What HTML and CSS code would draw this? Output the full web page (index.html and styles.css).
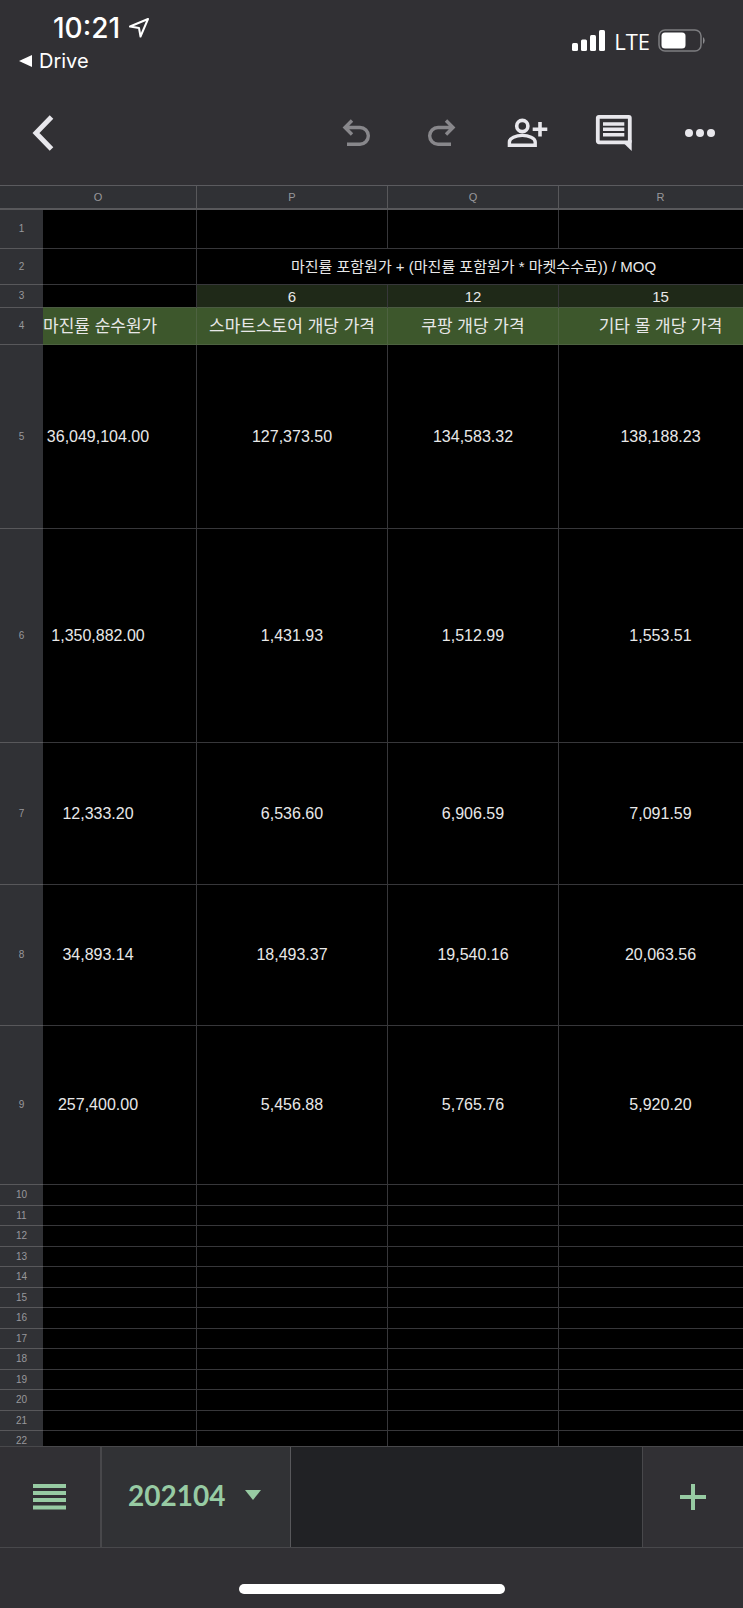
FILE: index.html
```
<!DOCTYPE html>
<html lang="ko">
<head>
    <meta charset="UTF-8">
    <meta name="viewport" content="width=device-width, initial-scale=1.0">
    <title>202104</title>
    <link rel="stylesheet" href="styles.css">
</head>
<body>

    <!-- Status bar -->
    <div class="status">
        <div class="status-left">
            <div class="clock">
                <span>10:21</span>
                <svg width="22" height="22" viewBox="0 0 22 22"><path d="M20 2L2 9.500L11 11L12.500 19.500Z" fill="none" stroke="#fff" stroke-width="2" stroke-linejoin="round"/></svg>
            </div>
            <a href="#" class="return">
                <svg width="14" height="14" viewBox="0 0 14 14"><path d="M0 7L13 1V13Z" fill="#fff"/></svg>
                Drive
            </a>
        </div>
        <div class="status-right">
            <svg width="34" height="22" viewBox="0 0 34 22" fill="#fff">
                <rect x="0" y="13" width="6" height="8" rx="1.500"/>
                <rect x="9" y="9.500" width="6" height="11.500" rx="1.500"/>
                <rect x="18" y="5" width="6" height="16" rx="1.500"/>
                <rect x="27" y="0" width="6" height="21" rx="1.500"/>
            </svg>
            <span>LTE</span>
            <svg width="48" height="24" viewBox="0 0 48 24">
                <rect x="1" y="1" width="42" height="21" rx="6" fill="none" stroke="#7d7d80" stroke-width="1.500"/>
                <rect x="3.500" y="3.500" width="24" height="16" rx="3.500" fill="#fff"/>
                <path d="M45 8a4.500 4.500 0 0 1 0 7Z" fill="#8b8b8e"/>
            </svg>
        </div>
    </div>

    <!-- Toolbar -->
    <header class="toolbar">
        <button class="tool back" aria-label="뒤로">
            <svg viewBox="0 0 48 48"><path d="M32.500 8L17 24L32.500 40" stroke-width="5"/></svg>
        </button>
        <button class="tool" aria-label="실행취소" disabled>
            <svg viewBox="0 0 48 48"><path d="M20 11.500L13 18.500L20 25.500M13 18.500H28A8.300 8.300 0 0 1 28 35.200H15" stroke-width="3.400"/></svg>
        </button>
        <button class="tool" aria-label="재실행" disabled>
            <svg viewBox="0 0 48 48"><path d="M28 11.500L35 18.500L28 25.500M35 18.500H20A8.300 8.300 0 0 0 20 35.200H33" stroke-width="3.400"/></svg>
        </button>
        <button class="tool" aria-label="공유">
            <svg viewBox="0 0 48 48">
                <circle cx="18.300" cy="17" r="5.600" stroke-width="3.600"/>
                <path d="M5.400 36.300V33C5.400 29 12 26.400 18.300 26.400S31.200 29 31.200 33V36.300Z" stroke-width="3.400"/>
                <path d="M36 13V27.600M28.700 20.300H43.300" stroke-width="3.600"/>
            </svg>
        </button>
        <button class="tool" aria-label="댓글">
            <svg viewBox="0 0 48 48">
                <rect x="7.800" y="7.800" width="32" height="25.500" rx="1" stroke-width="3.800"/>
                <path d="M34 34.500L41.700 42V31Z" class="solid"/>
                <path d="M13 15H34.300M13 20.300H34.300M13 25.700H34.300" stroke-width="3.600"/>
            </svg>
        </button>
        <button class="tool" aria-label="더보기">
            <svg viewBox="0 0 48 48" class="solid">
                <circle cx="13" cy="24" r="4"/>
                <circle cx="24" cy="24" r="4"/>
                <circle cx="35" cy="24" r="4"/>
            </svg>
        </button>
    </header>

    <!-- Sheet -->
    <main class="sheet">
        <table>
            <colgroup>
                <col class="col-num">
                <col class="col-o">
                <col class="col-p">
                <col class="col-q">
                <col>
            </colgroup>
            <thead>
                <tr><td class="corner"></td><th>O</th><th>P</th><th>Q</th><th>R</th></tr>
            </thead>
            <tbody>
                <tr class="row-1"><th>1</th><td></td><td></td><td></td><td></td></tr>
                <tr class="row-2"><th>2</th><td></td><td colspan="3">마진률 포함원가 + (마진률 포함원가 * 마켓수수료)) / MOQ</td></tr>
                <tr class="row-3"><th>3</th><td></td><td>6</td><td>12</td><td>15</td></tr>
                <tr class="row-4"><th>4</th><td>마진률 순수원가</td><td>스마트스토어 개당 가격</td><td>쿠팡 개당 가격</td><td>기타 몰 개당 가격</td></tr>
                <tr class="row-5"><th>5</th><td>36,049,104.00</td><td>127,373.50</td><td>134,583.32</td><td>138,188.23</td></tr>
                <tr class="row-6"><th>6</th><td>1,350,882.00</td><td>1,431.93</td><td>1,512.99</td><td>1,553.51</td></tr>
                <tr class="row-7"><th>7</th><td>12,333.20</td><td>6,536.60</td><td>6,906.59</td><td>7,091.59</td></tr>
                <tr class="row-8"><th>8</th><td>34,893.14</td><td>18,493.37</td><td>19,540.16</td><td>20,063.56</td></tr>
                <tr class="row-9"><th>9</th><td>257,400.00</td><td>5,456.88</td><td>5,765.76</td><td>5,920.20</td></tr>
                <tr><th>10</th><td></td><td></td><td></td><td></td></tr>
                <tr><th>11</th><td></td><td></td><td></td><td></td></tr>
                <tr><th>12</th><td></td><td></td><td></td><td></td></tr>
                <tr><th>13</th><td></td><td></td><td></td><td></td></tr>
                <tr><th>14</th><td></td><td></td><td></td><td></td></tr>
                <tr><th>15</th><td></td><td></td><td></td><td></td></tr>
                <tr><th>16</th><td></td><td></td><td></td><td></td></tr>
                <tr><th>17</th><td></td><td></td><td></td><td></td></tr>
                <tr><th>18</th><td></td><td></td><td></td><td></td></tr>
                <tr><th>19</th><td></td><td></td><td></td><td></td></tr>
                <tr><th>20</th><td></td><td></td><td></td><td></td></tr>
                <tr><th>21</th><td></td><td></td><td></td><td></td></tr>
                <tr><th>22</th><td></td><td></td><td></td><td></td></tr>
            </tbody>
        </table>
    </main>

    <!-- Sheet tabs -->
    <nav class="tabs">
        <button class="all-sheets" aria-label="모든 시트">
            <svg width="34" height="26" viewBox="0 0 34 26"><path d="M0 2H33M0 9H33M0 16H33M0 23.500H33" stroke-width="4"/></svg>
        </button>
        <button class="tab">
            202104
            <svg width="16" height="10" viewBox="0 0 16 10"><path d="M0 0H16L8 10Z" class="arrow"/></svg>
        </button>
        <div class="track"></div>
        <button class="add-sheet" aria-label="시트 추가">
            <svg width="26" height="26" viewBox="0 0 26 26"><path d="M13 0V26M0 13H26" stroke-width="4"/></svg>
        </button>
    </nav>

    <footer class="home">
        <div class="home-bar"></div>
    </footer>

</body>
</html>
```

FILE: styles.css
```
* {
    box-sizing: border-box;
}

body {
    margin: 0;
    height: 100vh;
    display: flex;
    flex-direction: column;
    overflow: hidden;
    background-color: #313034;
    color: #fff;
    font-family: "Liberation Sans", "Noto Sans CJK KR", sans-serif;
}

button {
    display: flex;
    align-items: center;
    justify-content: center;
    margin: 0;
    padding: 0;
    border: none;
    background: none;
    cursor: pointer;
}

svg {
    display: block;
    flex: none;
}

/* Status bar */
.status {
    flex: none;
    display: flex;
    justify-content: space-between;
    height: 80px;
    padding: 12px 37px 0 19px;
    font-family: Inter, sans-serif;
}

.clock {
    display: flex;
    align-items: center;
    gap: 8px;
    height: 32px;
    padding-left: 34px;
    font-size: 28px;
    font-weight: 500;
}

.return {
    display: flex;
    align-items: center;
    gap: 6px;
    height: 34px;
    color: #fff;
    font-size: 20px;
    text-decoration: none;
}

.status-right {
    display: flex;
    align-items: center;
    gap: 8px;
    height: 58px;
    font-family: "Open Sans", sans-serif;
    font-size: 22px;
    font-weight: 500;
}

/* Toolbar */
.toolbar {
    flex: none;
    display: flex;
    height: 105px;
}

.tool {
    width: 86px;
    color: #e8e7ec;
}

.tool:disabled {
    color: #88878b;
}

.tool svg {
    width: 48px;
    height: 48px;
    fill: none;
    stroke: currentColor;
}

.tool .solid {
    fill: currentColor;
    stroke: none;
}

.back {
    margin-right: auto;
}

/* Sheet */
.sheet {
    flex: 1;
    min-height: 0;
    overflow: hidden;
    border-top: 1px solid #5b5b5f;
    background-color: #000;
}

table {
    width: calc(100% + 20px);
    table-layout: fixed;
    border-collapse: separate;
    border-spacing: 0;
}

.col-num {
    width: 43px;
}

.col-o {
    width: 154px;
}

.col-p {
    width: 191px;
}

.col-q {
    width: 171px;
}

td,
th {
    height: 20px;
    padding: 0;
    border-right: 1px solid #37373a;
    border-bottom: 1px solid #37373a;
    color: #e8e8e8;
    font-size: 16px;
    line-height: 1;
    text-align: center;
    white-space: nowrap;
}

tr:nth-child(even) > * {
    height: 21px;
}

th,
.corner {
    border-color: #58585b;
    background-color: #303135;
    color: #98989c;
    font-size: 10px;
    font-weight: 400;
}

tbody th,
.corner {
    border-right: none;
}

thead th,
thead .corner {
    height: 24px;
    border-bottom-width: 2px;
}

thead th {
    font-size: 11px;
}

tr > :nth-child(2) {
    padding-right: 43px;
}

tbody .row-1 > * {
    height: 39px;
}

tbody .row-2 > * {
    height: 36px;
}

.row-2 td {
    font-size: 15px;
}

.row-2 td:last-child {
    padding-right: 12px;
}

tbody .row-3 > * {
    height: 23px;
}

.row-3 td {
    border-bottom-color: #4b5a42;
    font-size: 15px;
}

.row-3 td:nth-child(n+3) {
    background-color: #1f2918;
}

tbody .row-4 > * {
    height: 37px;
}

.row-4 td {
    border-color: #4d6240;
    background-color: #3d572c;
    font-size: 17px;
}

tbody .row-5 > * {
    height: 184px;
}

tbody .row-6 > * {
    height: 214px;
}

tbody .row-7 > * {
    height: 142px;
}

tbody .row-8 > * {
    height: 141px;
}

tbody .row-9 > * {
    height: 159px;
}

/* Sheet tabs */
.tabs {
    flex: none;
    display: flex;
    height: 102px;
    border-top: 1px solid #48484b;
    border-bottom: 1px solid #48484b;
}

.tabs svg {
    stroke: #97cba3;
}

.tabs .arrow {
    fill: #97cba3;
    stroke: none;
}

.all-sheets {
    width: 102px;
    border-right: 2px solid #48484b;
}

.tab {
    gap: 20px;
    padding: 0 29px 4px 26px;
    border-right: 1px solid #58585b;
    background-color: #313235;
    color: #97cba3;
    font-family: Lato, sans-serif;
    font-size: 28px;
    font-weight: 700;
}

.track {
    flex: 1;
    background-color: #212225;
}

.add-sheet {
    width: 101px;
    border-left: 1px solid #48484b;
}

/* Home indicator */
.home {
    flex: none;
    display: flex;
    justify-content: center;
    height: 60px;
    padding-top: 36px;
}

.home-bar {
    width: 266px;
    height: 10px;
    border-radius: 5px;
    background-color: #fff;
}
```
